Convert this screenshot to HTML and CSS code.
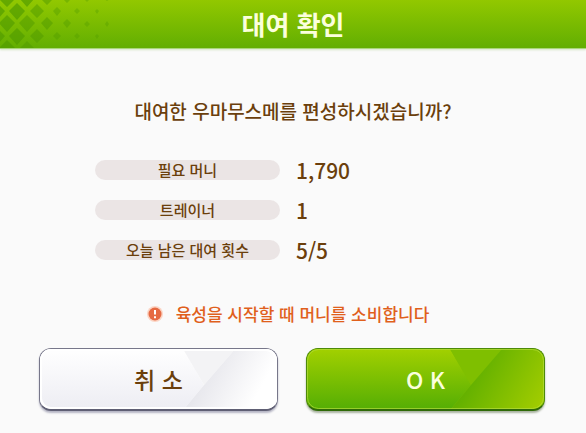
FILE: index.html
```html
<!DOCTYPE html>
<html lang="ko">
<head>
    <meta charset="UTF-8">
    <meta name="viewport" content="width=device-width, initial-scale=1.0">
    <title>대여 확인</title>
    <link rel="stylesheet" href="styles.css">
</head>
<body>
    <main class="dialog">
        <header class="dialog-header">
            <svg class="header-pattern" width="120" height="48" viewBox="0 0 120 48" aria-hidden="true">
                <g fill="#4f9a00">
                    <path d="M-3 3l8 8-8 9-8-9zM17 3l8 8-8 9-8-9zM7-10l8 9-8 8-8-8zM27-9l7 8-7 8-7-8z" opacity=".65"/>
                    <path d="M7 15l8 8-8 9-8-9zM-3 28l8 8-8 9-8-9zM17 28l8 8-8 9-8-9zM7 40l8 8H-1z" opacity=".6"/>
                    <path d="M37 4l7 7-7 7-7-7zM27 15l8 8-8 9-8-9zM47 17l6 6-6 7-6-7zM47-7l6 6-6 6-6-6zM37 29l7 7-7 7-7-7zM27 41l7 7H20z" opacity=".5"/>
                    <path d="M57 7l4 4-4 5-4-5zM67 19l4 4-4 5-4-5zM67-4l4 3-4 4-4-4zM57 32l4 4-4 4-4-4z" opacity=".4"/>
                    <path d="M77 8l3 3-3 3-3-3zM87 21l3 3-3 3-3-3zM87-4l3 3-3 3-3-3zM77 33l3 3-3 3-3-3zM97 9l2 2-2 3-2-3zM107 21l2 3-2 3-2-3zM107-3l3 2-3 2-3-2zM97 34l2 2-2 3-2-3z" opacity=".35"/>
                </g>
            </svg>
            <h1>대여 확인</h1>
        </header>
        <div class="dialog-body">
            <p class="question">대여한 우마무스메를 편성하시겠습니까?</p>
            <dl class="info">
                <dt>필요 머니</dt>
                <dd>1,790</dd>
                <dt>트레이너</dt>
                <dd>1</dd>
                <dt>오늘 남은 대여 횟수</dt>
                <dd>5/5</dd>
            </dl>
            <p class="notice">
                <svg width="16" height="16" viewBox="0 0 16 16" aria-hidden="true">
                    <circle cx="8" cy="8" r="8" fill="#fbd5c5"/>
                    <circle cx="8" cy="8" r="6.5" fill="#e66a43"/>
                    <path d="M8 4v4.5M8 10.2v2" stroke="#fff" stroke-width="2"/>
                </svg>
                육성을 시작할 때 머니를 소비합니다
            </p>
        </div>
        <div class="actions">
            <button type="button" class="btn btn-cancel">
                <svg class="btn-shine" viewBox="0 0 237 60" preserveAspectRatio="none" aria-hidden="true">
                    <defs>
                        <linearGradient id="cancel-left" x1="0" y1="0" x2="0" y2="1">
                            <stop offset="0" stop-color="#fff"/>
                            <stop offset="1" stop-color="#ededf3"/>
                        </linearGradient>
                        <linearGradient id="cancel-right" gradientUnits="userSpaceOnUse" x1="160" y1="20" x2="215" y2="50">
                            <stop offset="0" stop-color="#e4e4ea"/>
                            <stop offset="1" stop-color="#fff"/>
                        </linearGradient>
                    </defs>
                    <path d="M0 0H143L164 36 144 60H0z" fill="url(#cancel-left)"/>
                    <path d="M143 0H195L164 36z" fill="#f3f3f5"/>
                    <path d="M195 0H237V60H144L164 36z" fill="url(#cancel-right)"/>
                    <rect x="1" y="1" width="235" height="58" rx="10" fill="none" stroke="#fff" stroke-width="2"/>
                </svg>
                <span>취 소</span>
            </button>
            <button type="button" class="btn btn-ok">
                <svg class="btn-shine" viewBox="0 0 237 60" preserveAspectRatio="none" aria-hidden="true">
                    <defs>
                        <linearGradient id="ok-left" x1="0" y1="0" x2="0" y2="1">
                            <stop offset="0" stop-color="#a2d000"/>
                            <stop offset="1" stop-color="#55ae04"/>
                        </linearGradient>
                        <linearGradient id="ok-right" gradientUnits="userSpaceOnUse" x1="160" y1="20" x2="230" y2="60">
                            <stop offset="0" stop-color="#5cad00"/>
                            <stop offset="1" stop-color="#a0cc00"/>
                        </linearGradient>
                    </defs>
                    <path d="M0 0H143L164 36 144 60H0z" fill="url(#ok-left)"/>
                    <path d="M143 0H195L164 36z" fill="#7fbf00"/>
                    <path d="M195 0H237V60H144L164 36z" fill="url(#ok-right)"/>
                    <rect x=".5" y=".5" width="236" height="59" rx="11" fill="none" stroke="#b4dc3c" stroke-opacity=".7"/>
                </svg>
                <span>O K</span>
            </button>
        </div>
    </main>
</body>
</html>
```
FILE: styles.css
```css
* {
    box-sizing: border-box;
}
body {
    margin: 0;
    background-color: #fafafa;
    color: #6b3f0c;
    font-family: "Noto Sans CJK KR", sans-serif;
    font-weight: 500;
}
h1,
p,
dl,
dd {
    margin: 0;
}
.dialog-header {
    position: relative;
    padding: 6px 0;
    background: linear-gradient(#92c800, #62ae02);
    border-bottom: 1px solid #a9d67a;
    box-shadow: 0 1px 2px #d5e5c8;
}
.header-pattern {
    position: absolute;
    top: 0;
    left: 0;
}
h1 {
    color: #fbffdc;
    font-size: 26px;
    font-weight: 700;
    line-height: 36px;
    text-align: center;
}
.dialog-body {
    padding: 48px 40px 20px;
}
.question {
    font-size: 19px;
    line-height: 28px;
    text-align: center;
}
.info {
    display: grid;
    grid-template-columns: 41% 1fr;
    align-items: center;
    gap: 12px 16px;
    margin: 31px 0 0 55px;
}
.info dt {
    background-color: #ebe5e5;
    border-radius: 10px;
    font-size: 15px;
    line-height: 20px;
    text-align: center;
}
.info dd {
    font-size: 21px;
    line-height: 28px;
}
.notice {
    display: flex;
    justify-content: center;
    align-items: center;
    gap: 13px;
    margin-top: 36px;
    padding-right: 10px;
    color: #e0601c;
    font-size: 17px;
    line-height: 28px;
}
.actions {
    display: grid;
    grid-template-columns: 1fr 1fr;
    gap: 28px;
    padding: 0 41px 20px 39px;
}
.btn {
    position: relative;
    overflow: hidden;
    height: 63px;
    padding: 0;
    border-radius: 12px;
    font: inherit;
    font-size: 23px;
    cursor: pointer;
}
.btn span {
    position: relative;
}
.btn-shine {
    position: absolute;
    top: 0;
    left: 0;
    width: 100%;
    height: 100%;
}
.btn-cancel {
    background-color: #fff;
    border: 1px solid #77778a;
    border-bottom: 2px solid #5f5f74;
    box-shadow: 0 2px 2px #b5b5c4;
    color: #6b3f0c;
}
.btn-ok {
    background-color: #7fbf00;
    border: 1px solid #4d8a08;
    border-bottom: 2px solid #2f6a08;
    box-shadow: 0 2px 2px #a9b3a0;
    color: #fbffdc;
}
```
